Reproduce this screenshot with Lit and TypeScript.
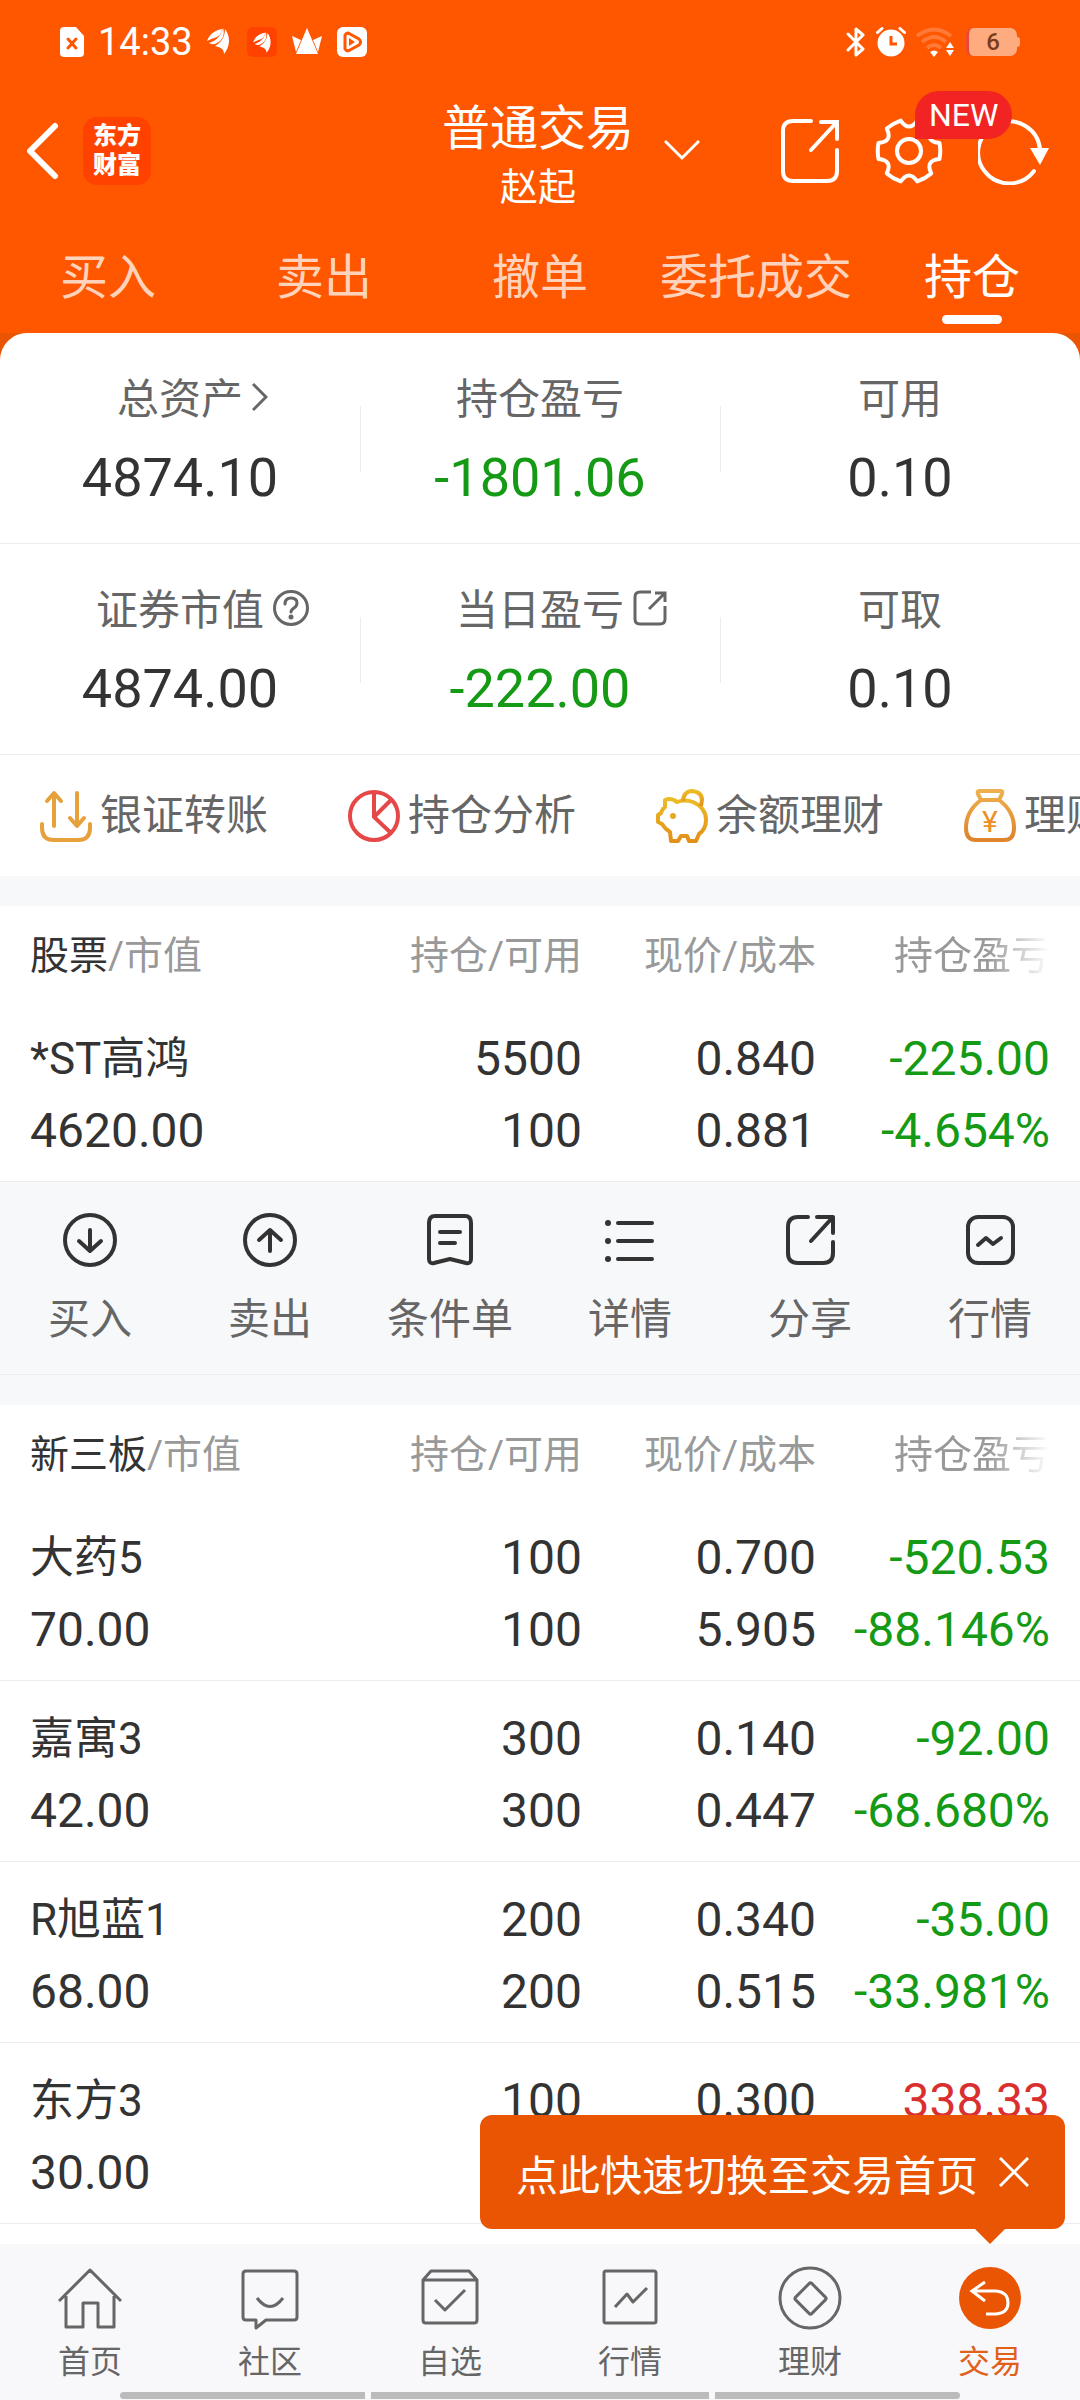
import { LitElement, html, svg, css, nothing, TemplateResult } from "lit";
import { customElement, property, state } from "lit/decorators.js";
import { classMap } from "lit/directives/class-map.js";

/** Outline of a six-lobed gear centred on the origin. */
function gearPath(): string {
  const rotate = (x: number, y: number, deg: number) => {
    const a = (deg * Math.PI) / 180;
    const px = x * Math.cos(a) - y * Math.sin(a);
    const py = x * Math.sin(a) + y * Math.cos(a);
    return `${px.toFixed(2)} ${py.toFixed(2)}`;
  };
  let d = `M${rotate(30.5, -8, 0)}`;
  for (let deg = 0; deg < 360; deg += 60) {
    d += `Q${rotate(32, 0, deg)} ${rotate(30.5, 8, deg)}`;
    d += `Q${rotate(16, 9.2, deg)} ${rotate(30.5, -8, deg + 60)}`;
  }
  return d + "Z";
}

interface IconDef {
  w: number;
  h: number;
  body: TemplateResult;
}

const feather = svg`
  <path d="M0 13C3 5 9 2 15 1C15 5 12 9 7 10C4 11 2 12 0 13Z"/>
  <path d="M2 15C9 13 14 8 16 0C18 6 16 12 10 15C7 17 4 16 2 15Z"/>
  <path d="M8 18C15 14 18 8 18 1C24 9 23 19 17 26C17 20 12 19 8 18Z"/>`;

const ICONS: Record<string, IconDef> = {
  sim: {
    w: 24, h: 30,
    body: svg`<path d="M4 0H16L24 9V26Q24 30 20 30H4Q0 30 0 26V4Q0 0 4 0Z" fill="#fff"/>
      <path d="M8 12L16 21M16 12L8 21" stroke="#ff5600" stroke-width="3" stroke-linecap="round"/>`,
  },
  feather: { w: 26, h: 28, body: svg`<g fill="#fff">${feather}</g>` },
  featherBox: {
    w: 30, h: 30,
    body: svg`<rect width="30" height="30" rx="6" fill="#ff4200"/>
      <g fill="#fff" transform="translate(6 5) scale(.8)">${feather}</g>`,
  },
  crown: {
    w: 32, h: 28,
    body: svg`<path d="M16 0L27 26H5Z" fill="#fff"/><path d="M1 8L10 12L5 24Z M31 8L22 12L27 24Z" fill="#fff"/>`,
  },
  play: {
    w: 30, h: 30,
    body: svg`<rect width="30" height="30" rx="6" fill="#fff"/>
      <path d="M8 8Q10 5 13 7L22 12Q25 15 22 18L13 23Q10 25 8 22Z" fill="#fff" stroke="#ff5600" stroke-width="3"/>
      <path d="M12 11L18 15L12 19Z" fill="#ff5600"/>`,
  },
  bluetooth: {
    w: 20, h: 30,
    body: svg`<path d="M2 7L17 22L10 28V2L17 8L2 23" fill="none" stroke="#fff" stroke-width="3" stroke-linejoin="round" stroke-linecap="round"/>`,
  },
  alarm: {
    w: 30, h: 30,
    body: svg`<circle cx="15" cy="16" r="13.5" fill="#fff"/>
      <path d="M1.500 5.500L6 1.500M28.500 5.500L24 1.500" stroke="#fff" stroke-width="3" stroke-linecap="round"/>
      <path d="M15 9V17H21" fill="none" stroke="#ff5600" stroke-width="3"/>`,
  },
  wifi: {
    w: 40, h: 30,
    body: svg`<g fill="none" stroke="#ff7a36" stroke-width="4">
        <path d="M1 9Q18 -4 35 9"/><path d="M6 15Q18 5 30 15"/><path d="M11 21Q18 15 25 21"/></g>
      <path d="M14 25Q18 22 22 25L18 30Z" fill="#fff"/>
      <path d="M34 15L38 21H30ZM34 29L38 23H30Z" fill="#fff"/>`,
  },
  back: {
    w: 34, h: 58,
    body: svg`<path d="M29 4L4 29L29 54" fill="none" stroke="#fff" stroke-width="6" stroke-linecap="round" stroke-linejoin="round"/>`,
  },
  down: {
    w: 36, h: 22,
    body: svg`<path d="M1 2L18 19L35 2" fill="none" stroke="#fff" stroke-width="3"/>`,
  },
  share: {
    w: 60, h: 66,
    body: svg`<g fill="none" stroke="#fff" stroke-width="4" stroke-linecap="round">
      <path d="M31 3H13Q3 3 3 13V53Q3 63 13 63H47Q57 63 57 53V32"/>
      <path d="M41 4H57V21M57 4L31 32"/></g>`,
  },
  gear: {
    w: 68, h: 68,
    body: svg`<g transform="translate(34 34)" fill="none" stroke="#fff" stroke-width="4" stroke-linejoin="round">
      <path d=${gearPath()}/><circle r="12"/></g>`,
  },
  refresh: {
    w: 72, h: 68,
    body: svg`<path d="M56 54A31 31 0 1 1 62 32" fill="none" stroke="#fff" stroke-width="4" stroke-linecap="round"/>
      <path d="M52 31H71L62 48Z" fill="#fff"/>`,
  },
  right: {
    w: 16, h: 30,
    body: svg`<path d="M1 2L14 15L1 28" fill="none" stroke="#666" stroke-width="3"/>`,
  },
  help: {
    w: 36, h: 36,
    body: svg`<g fill="none" stroke="#666"><circle cx="18" cy="18" r="16.500" stroke-width="3"/>
      <path d="M12 14Q12 8 18 8Q24 8 24 13Q24 16 21 18Q18 20 18 22" stroke-width="3" stroke-linecap="round"/></g>
      <circle cx="18" cy="27" r="2.500" fill="#666"/>`,
  },
  open: {
    w: 34, h: 36,
    body: svg`<g fill="none" stroke="#666" stroke-width="3">
      <path d="M18 2H7Q2 2 2 7V29Q2 34 7 34H27Q32 34 32 29V16"/><path d="M22 3H32V12M32 3L16 19"/></g>`,
  },
  transfer: {
    w: 52, h: 52,
    body: svg`<g fill="none" stroke="#e6a13c" stroke-width="4" stroke-linecap="round" stroke-linejoin="round">
      <path d="M14 36V4M7 11L14 3L21 11"/><path d="M37 3V35M30 28L37 36L44 28"/>
      <path d="M2 34V38Q2 50 14 50H38Q50 50 50 38V34"/></g>`,
  },
  pie: {
    w: 52, h: 52,
    body: svg`<g fill="none" stroke="#e6484a" stroke-width="4"><circle cx="26" cy="26" r="24"/>
      <path d="M26 2V27L43 43M26 27L43 10"/></g>`,
  },
  pig: {
    w: 52, h: 54,
    body: svg`<defs><linearGradient id="pigInk" x1="0" y1="0" x2="0" y2="1">
        <stop offset="0" stop-color="#edbb25"/><stop offset="1" stop-color="#e39019"/></linearGradient></defs>
      <g fill="none" stroke="url(#pigInk)" stroke-width="4" stroke-linejoin="round">
      <path d="M9 11Q13 9 18 11L21 13Q29 10 37 13C46 17 50 24 50 31Q50 40 43 45L40 52H33L31 47H25L22 52H15L14 43Q9 40 6 35L2 33V26L5 24Q6 20 9 18Z"/>
      <path d="M27 12Q28 2 36 2Q46 3 46 11L45 17"/></g>
      <circle cx="17" cy="27" r="3" fill="#e9a81f"/>`,
  },
  bag: {
    w: 52, h: 54,
    body: svg`<defs><linearGradient id="bagInk" x1="0" y1="0" x2="0" y2="1">
        <stop offset="0" stop-color="#eeb04e"/><stop offset="1" stop-color="#df832c"/></linearGradient></defs>
      <path d="M15 2H37Q39 2 38 5L35 11H17L14 5Q13 2 15 2ZM17 11Q2 22 2 39Q2 51 12 51H40Q50 51 50 39Q50 22 35 11" fill="none" stroke="url(#bagInk)" stroke-width="4"/>
      <text x="26" y="43" text-anchor="middle" font-family="Roboto, sans-serif" font-size="30" fill="#ee8f25">¥</text>`,
  },
  buy: {
    w: 54, h: 54,
    body: svg`<g fill="none" stroke="#333" stroke-width="4" stroke-linecap="round" stroke-linejoin="round"><circle cx="27" cy="27" r="25"/>
      <path d="M27 17V38M16 28L27 38L38 28"/></g>`,
  },
  sell: {
    w: 54, h: 54,
    body: svg`<g fill="none" stroke="#333" stroke-width="4" stroke-linecap="round" stroke-linejoin="round"><circle cx="27" cy="27" r="25"/>
      <path d="M27 38V17M16 27L27 17L38 27"/></g>`,
  },
  order: {
    w: 54, h: 54,
    body: svg`<g fill="none" stroke="#333" stroke-width="4" stroke-linecap="round" stroke-linejoin="round">
      <path d="M12 3H42Q48 3 48 10V46Q48 51 43 50L27 46L11 50Q6 51 6 46V10Q6 3 12 3Z"/><path d="M17 19H37M17 30H32"/></g>`,
  },
  list: {
    w: 54, h: 54,
    body: svg`<g stroke="#333" stroke-width="4" stroke-linecap="round"><path d="M15 10H49M15 28H49M15 46H49"/></g>
      <g fill="#333"><circle cx="5" cy="10" r="3"/><circle cx="5" cy="28" r="3"/><circle cx="5" cy="46" r="3"/></g>`,
  },
  shareDark: {
    w: 54, h: 54,
    body: svg`<g fill="none" stroke="#333" stroke-width="4" stroke-linecap="round" stroke-linejoin="round">
      <path d="M25 4H15Q5 4 5 14V40Q5 50 15 50H40Q50 50 50 40V29"/><path d="M34 4H50V20M50 4L28 28"/></g>`,
  },
  quote: {
    w: 54, h: 54,
    body: svg`<g fill="none" stroke="#333" stroke-width="4" stroke-linecap="round" stroke-linejoin="round">
      <rect x="5" y="4" width="45" height="46" rx="10"/><path d="M15 32L23 25L30 31L38 25"/></g>`,
  },
  home: {
    w: 64, h: 64,
    body: svg`<g fill="none" stroke="#666" stroke-width="3" stroke-linejoin="round">
      <path d="M1 35L32 4L63 35M8 30V61H25V37H40V61H56V30"/></g>`,
  },
  chat: {
    w: 64, h: 64,
    body: svg`<g fill="none" stroke="#666" stroke-width="3" stroke-linejoin="round">
      <path d="M8 5H56Q59 5 59 8V51Q59 54 56 54H28L18 62V54H8Q5 54 5 51V8Q5 5 8 5Z"/><path d="M19 32Q32 49 45 32"/></g>`,
  },
  picks: {
    w: 64, h: 64,
    body: svg`<g fill="none" stroke="#666" stroke-width="3" stroke-linejoin="round">
      <path d="M13 5H51L59 14V54Q59 57 56 57H8Q5 57 5 54V14ZM5 14H59M17 34L27 44L47 24"/></g>`,
  },
  market: {
    w: 64, h: 64,
    body: svg`<g fill="none" stroke="#666" stroke-width="3" stroke-linejoin="round">
      <rect x="6" y="5" width="52" height="52" rx="2"/><path d="M17 41L29 28L35 36L49 22"/></g>`,
  },
  wealth: {
    w: 64, h: 64,
    body: svg`<g fill="none" stroke="#666" stroke-width="3" stroke-linejoin="round">
      <circle cx="32" cy="32" r="30"/><rect x="21" y="21" width="23" height="23" rx="2" transform="rotate(45 32.500 32.500)"/></g>`,
  },
  trade: {
    w: 64, h: 64,
    body: svg`<circle cx="32" cy="32" r="31" fill="#ea5504"/>
      <path d="M27 16L14 25L27 35M14 25H38Q50 26 50 37Q50 47 38 48H28" fill="none" stroke="#fff" stroke-width="3"/>`,
  },
  close: {
    w: 30, h: 30,
    body: svg`<path d="M1 1L29 29M29 1L1 29" stroke="#fff" stroke-width="3"/>`,
  },
};

const icon = (name: string) => {
  const { w, h, body } = ICONS[name];
  return html`<svg class="icon" width=${w} height=${h} viewBox="0 0 ${w} ${h}" aria-hidden="true">${body}</svg>`;
};

interface Holding {
  name: string;
  marketValue: string;
  shares: [string, string];
  price: [string, string];
  profit: [string, string];
}

const base = css`
  *, *::before, *::after { box-sizing: border-box; }
  .icon { display: block; flex: none; }
  button, a {
    font: inherit; color: inherit; background: none; border: 0;
    padding: 0; margin: 0; text-decoration: none; cursor: pointer;
  }
`;

@customElement("holdings-table")
class HoldingsTable extends LitElement {
  @property() market = "";
  @property({ attribute: false }) rows: Holding[] = [];

  static styles = [base, css`
    :host { display: block; background: #fff; }
    table { width: 100%; table-layout: fixed; border-collapse: separate; border-spacing: 0; }
    .col-num { width: 234px; }
    .col-last { width: 264px; }
    th, td { padding: 0; text-align: right; white-space: nowrap; }
    th { height: 95px; padding-bottom: 4px; font-size: 39px; font-weight: 400; color: #999; }
    th:first-child, td:first-child { padding-left: 30px; text-align: left; }
    th:last-child, td:last-child { padding-right: 30px; }
    .market { color: #333; }
    .fade {
      display: inline-block;
      -webkit-mask-image: linear-gradient(to right, #000 60%, transparent);
      mask-image: linear-gradient(to right, #000 60%, transparent);
    }
    td { padding-top: 22px; padding-bottom: 14px; border-bottom: 1px solid #ececec; font-size: 48px; color: #333; }
    .line { height: 72px; line-height: 72px; }
    .name { font-size: 44px; }
    .down { color: #149a14; }
    .up { color: #d9302f; }
  `];

  render() {
    return html`<table>
      <colgroup><col><col class="col-num"><col class="col-num"><col class="col-last"></colgroup>
      <thead><tr>
        <th scope="col"><span class="market">${this.market}</span>/市值</th>
        <th scope="col">持仓/可用</th>
        <th scope="col">现价/成本</th>
        <th scope="col"><span class="fade">持仓盈亏</span></th>
      </tr></thead>
      <tbody>${this.rows.map((r) => {
        const falling = r.profit[0].startsWith("-");
        return html`<tr>
          <td><div class="line name">${r.name}</div><div class="line">${r.marketValue}</div></td>
          ${[r.shares, r.price].map((c) => html`<td>${c.map((v) => html`<div class="line">${v}</div>`)}</td>`)}
          <td class=${classMap({ down: falling, up: !falling })}>${r.profit.map((v) => html`<div class="line">${v}</div>`)}</td>
        </tr>`;
      })}</tbody>
    </table>`;
  }
}

const SUMMARY = [
  [
    { label: "总资产", value: "4874.10", mark: "right", down: false },
    { label: "持仓盈亏", value: "-1801.06", mark: "", down: true },
    { label: "可用", value: "0.10", mark: "", down: false },
  ],
  [
    { label: "证券市值", value: "4874.00", mark: "help", down: false },
    { label: "当日盈亏", value: "-222.00", mark: "open", down: true },
    { label: "可取", value: "0.10", mark: "", down: false },
  ],
];

const STOCKS: Holding[] = [
  { name: "*ST高鸿", marketValue: "4620.00", shares: ["5500", "100"], price: ["0.840", "0.881"], profit: ["-225.00", "-4.654%"] },
];

const NEEQ: Holding[] = [
  { name: "大药5", marketValue: "70.00", shares: ["100", "100"], price: ["0.700", "5.905"], profit: ["-520.53", "-88.146%"] },
  { name: "嘉寓3", marketValue: "42.00", shares: ["300", "300"], price: ["0.140", "0.447"], profit: ["-92.00", "-68.680%"] },
  { name: "R旭蓝1", marketValue: "68.00", shares: ["200", "200"], price: ["0.340", "0.515"], profit: ["-35.00", "-33.981%"] },
  { name: "东方3", marketValue: "30.00", shares: ["100", ""], price: ["0.300", ""], profit: ["338.33", ""] },
];

@customElement("app-root")
class AppRoot extends LitElement {
  @state() private tab = "持仓";
  @state() private tipOpen = true;

  static styles = [base, css`
    :host {
      display: block;
      font-family: Roboto, "Noto Sans CJK SC", sans-serif;
      color: #333;
    }
    .page { display: flex; flex-direction: column; min-height: 100vh; background: #fff; overflow: hidden; }

    .top { background: #ff5600; color: #fff; }
    .status { display: flex; align-items: center; justify-content: space-between; height: 83px; padding: 0 60px; }
    .status-left, .status-right { display: flex; align-items: center; }
    .status-left { gap: 14px; }
    .clock { font-size: 38px; line-height: 48px; }
    .status-right { gap: 10px; }
    .battery {
      position: relative; display: flex; align-items: center; justify-content: center; width: 51px; height: 28px; margin-right: 3px;
      border-radius: 7px; border-left: 3px solid #ea4a35; background: #ffab80;
      color: #7a3c1c; font-size: 24px; font-weight: 500; line-height: 28px;
    }
    .battery::after {
      content: ""; position: absolute; left: 100%; top: 9px; width: 3px; height: 10px;
      border-radius: 0 3px 3px 0; background: #ffab80;
    }

    .bar { display: grid; grid-template-columns: 1fr auto 1fr; align-items: center; height: 136px; padding: 0 30px 0 26px; }
    .bar-left { display: flex; align-items: center; gap: 23px; }
    .logo {
      display: flex; flex-direction: column; width: 68px; height: 68px; justify-content: center; align-items: center;
      border-radius: 14px; background: #ff4200; font-size: 24px; line-height: 29px; font-weight: 900;
    }
    .title { position: relative; display: flex; flex-direction: column; align-items: center; padding-top: 10px; }
    .title-main { font-size: 48px; line-height: 62px; }
    .title-sub { font-size: 38px; line-height: 54px; }
    .title-arrow { position: absolute; left: 100%; top: 51px; margin-left: 30px; }
    .bar-right { display: flex; align-items: center; justify-content: flex-end; gap: 35px; }
    .settings { position: relative; }
    .badge {
      position: absolute; left: 40px; bottom: 46px; height: 48px; padding: 0 14px; z-index: 1;
      border-radius: 24px 24px 24px 0; background: #f22323; font-size: 32px; line-height: 48px;
    }

    .tabs { display: grid; grid-template-columns: repeat(5, 1fr); height: 114px; }
    .tab { display: flex; flex-direction: column; align-items: center; padding-top: 23px; font-size: 48px; line-height: 72px; white-space: nowrap; color: #ffd3bb; }
    .tab-on { color: #fff; }
    .tab-on::after { content: ""; width: 60px; height: 9px; margin-top: 1px; border-radius: 5px; background: #fff; }

    .main { flex: 1; background: linear-gradient(#ea5504 30px, #fff 30px); }
    .card { background: #fff; border-radius: 27px 27px 0 0; }
    .summary { display: grid; grid-template-columns: repeat(3, 1fr); height: 211px; border-bottom: 1px solid #ececec; align-items: center; }
    .figure { display: flex; flex-direction: column; align-items: center; justify-content: center; position: relative; height: 100%; padding-top: 8px; }
    .figure + .figure::before { content: ""; position: absolute; left: 0; top: 73px; width: 1px; height: 66px; background: #ececec; }
    .figure-label { position: relative; color: #666; font-size: 42px; line-height: 72px; }
    .figure-value { font-size: 54px; line-height: 84px; }
    .figure-mark { position: absolute; left: 100%; top: 0; height: 66px; margin-left: 9px; display: flex; align-items: center; }
    .down { color: #149a14; }

    .links { display: flex; align-items: center; gap: 80px; height: 121px; padding-left: 40px; overflow: hidden; }
    .link { display: flex; flex: none; align-items: center; gap: 8px; font-size: 42px; line-height: 60px; color: #666; }

    .band { height: 30px; background: #f7f8fa; }
    .actions { display: grid; grid-template-columns: repeat(6, 1fr); padding: 31px 0 24px; background: #f7f8fa; border-bottom: 1px solid #ececec; }
    .action { display: flex; flex-direction: column; align-items: center; gap: 23px; font-size: 42px; line-height: 60px; color: #666; white-space: nowrap; }

    .bottom { position: relative; background: #f8f8fa; }
    .nav { display: grid; grid-template-columns: repeat(6, 1fr); padding-top: 22px; }
    .nav-item { display: flex; flex-direction: column; align-items: center; gap: 12px; font-size: 32px; line-height: 40px; color: #666; }
    .nav-on { color: #e0601c; }
    .grips { display: grid; grid-template-columns: 245fr 338fr 245fr; gap: 6px; padding: 10px 120px 1px; }
    .grip { height: 7px; background: #bbb; }
    .grip:first-child { border-radius: 4px 0 0 4px; }
    .grip:last-child { border-radius: 0 4px 4px 0; }

    .tip {
      position: absolute; right: 15px; bottom: 100%; margin-bottom: 15px; display: flex; align-items: center; gap: 21px;
      height: 114px; padding: 0 36px; border-radius: 12px; background: #ea5504; color: #fff; font-size: 42px; white-space: nowrap;
    }
    .tip::after {
      content: ""; position: absolute; right: 60px; top: 100%; width: 30px; height: 15px;
      background: #ea5504; clip-path: polygon(0 0, 100% 0, 50% 100%);
    }
  `];

  render() {
    return html`<div class="page">
      <header class="top">
        <div class="status">
          <div class="status-left">
            ${icon("sim")}<span class="clock">14:33</span>${icon("feather")}${icon("featherBox")}${icon("crown")}${icon("play")}
          </div>
          <div class="status-right">
            ${icon("bluetooth")}${icon("alarm")}${icon("wifi")}<span class="battery">6</span>
          </div>
        </div>
        <div class="bar">
          <div class="bar-left">
            <button aria-label="返回">${icon("back")}</button>
            <span class="logo"><span>东方</span><span>财富</span></span>
          </div>
          <button class="title">
            <span class="title-main">普通交易</span>
            <span class="title-sub">赵起</span>
            <span class="title-arrow">${icon("down")}</span>
          </button>
          <div class="bar-right">
            <button aria-label="分享">${icon("share")}</button>
            <button class="settings" aria-label="设置">${icon("gear")}<span class="badge">NEW</span></button>
            <button aria-label="刷新">${icon("refresh")}</button>
          </div>
        </div>
        <nav class="tabs">
          ${["买入", "卖出", "撤单", "委托成交", "持仓"].map((t) => html`
            <button class=${classMap({ tab: true, "tab-on": t === this.tab })} @click=${() => (this.tab = t)}>${t}</button>`)}
        </nav>
      </header>

      <main class="main">
        <section class="card">
          ${SUMMARY.map((row) => html`<div class="summary">${row.map((f) => html`
            <div class="figure">
              <span class="figure-label">${f.label}${f.mark ? html`<span class="figure-mark">${icon(f.mark)}</span>` : nothing}</span>
              <span class=${classMap({ "figure-value": true, down: f.down })}>${f.value}</span>
            </div>`)}</div>`)}
          <nav class="links">
            ${[["transfer", "银证转账"], ["pie", "持仓分析"], ["pig", "余额理财"], ["bag", "理财"]].map(([i, t]) => html`
              <a class="link" href="#">${icon(i)}${t}</a>`)}
          </nav>
        </section>
        <div class="band"></div>
        <holdings-table market="股票" .rows=${STOCKS}></holdings-table>
        <div class="actions">
          ${[["buy", "买入"], ["sell", "卖出"], ["order", "条件单"], ["list", "详情"], ["shareDark", "分享"], ["quote", "行情"]].map(([i, t]) => html`
            <button class="action">${icon(i)}<span>${t}</span></button>`)}
        </div>
        <div class="band"></div>
        <holdings-table market="新三板" .rows=${NEEQ}></holdings-table>
      </main>

      <footer class="bottom">
        ${this.tipOpen ? html`<div class="tip"><span>点此快速切换至交易首页</span>
          <button aria-label="关闭" @click=${() => (this.tipOpen = false)}>${icon("close")}</button></div>` : nothing}
        <nav class="nav">
          ${[["home", "首页"], ["chat", "社区"], ["picks", "自选"], ["market", "行情"], ["wealth", "理财"], ["trade", "交易"]].map(([i, t]) => html`
            <a class=${classMap({ "nav-item": true, "nav-on": i === "trade" })} href="#">${icon(i)}<span>${t}</span></a>`)}
        </nav>
        <div class="grips"><span class="grip"></span><span class="grip"></span><span class="grip"></span></div>
      </footer>
    </div>`;
  }
}
